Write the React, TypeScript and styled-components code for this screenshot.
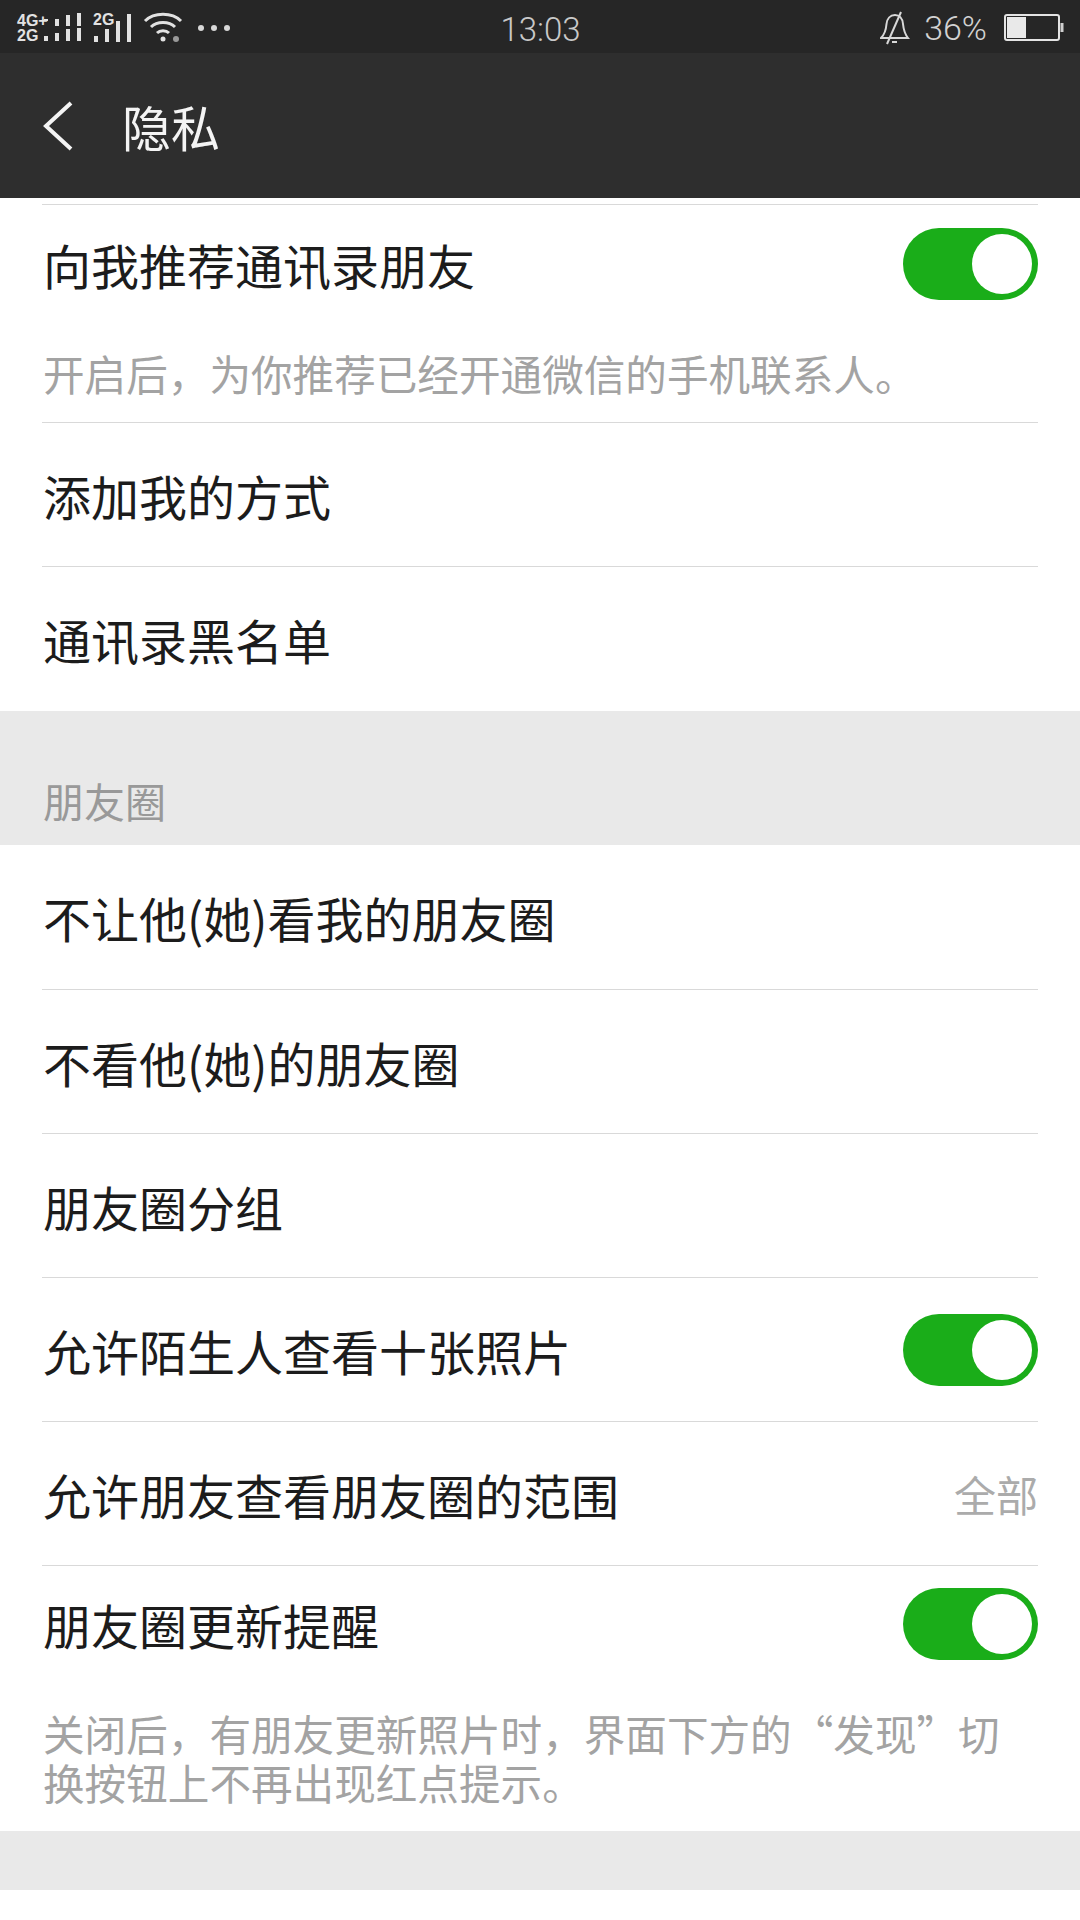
import { createGlobalStyle, styled } from 'styled-components';

const GlobalStyle = createGlobalStyle`
  html, body {
    margin: 0;
    padding: 0;
    background: #fff;
  }
  body {
    font-family: "Liberation Sans", "Noto Sans CJK SC", sans-serif;
  }
`;

const Page = styled.div`
  width: 1080px;
  height: 1920px;
  overflow: hidden;
  display: flex;
  flex-direction: column;
  background: #fff;
`;

const StatusBar = styled.div`
  height: 53px;
  flex: none;
  display: grid;
  grid-template-columns: 1fr auto 1fr;
  align-items: center;
  padding: 0 16px 0 17px;
  background: #262626;
  color: #d8d8d8;
`;

const StatusLeft = styled.div`
  display: flex;
  align-items: center;
  height: 53px;
`;

const StatusRight = styled.div`
  display: flex;
  align-items: center;
  justify-content: flex-end;
  height: 53px;
`;

const NetLabels = styled.div`
  display: flex;
  flex-direction: column;
  font: bold 16px/15px "Liberation Sans", sans-serif;
  width: 27px;
  color: #e2e2e2;
`;

const Clock = styled.div`
  font: 300 33px/53px Roboto, "Liberation Sans", sans-serif;
  padding-top: 3px;
  color: #c9c9c9;
`;

const Battery = styled.div`
  font: 300 34px/53px Roboto, "Liberation Sans", sans-serif;
  margin: 0 17px 0 14px;
  color: #d2d2d2;
`;

const Header = styled.header`
  height: 145px;
  flex: none;
  display: flex;
  align-items: center;
  padding-left: 43px;
  background: #2e2e2e;
`;

const Title = styled.h1`
  margin: 0 0 0 49px;
  font: 400 49px/1 "Noto Sans CJK SC", sans-serif;
  color: #f4f4f4;
`;

const Section = styled.section`
  background: #fff;
`;

const Divider = styled.div`
  height: 1px;
  margin: 0 42px;
  background: #d9d9d9;
`;

const Row = styled.div<{ $height?: number }>`
  height: ${(p) => p.$height ?? 143}px;
  display: flex;
  align-items: center;
  justify-content: space-between;
  padding: 0 42px 0 43px;
`;

const RowLabel = styled.span`
  font: 400 48px/1 "Noto Sans CJK SC", sans-serif;
  color: #1c1c1c;
`;

const RowValue = styled.span`
  font: 400 42px/1 "Noto Sans CJK SC", sans-serif;
  color: #ababab;
`;

const Hint = styled.p`
  margin: 0;
  padding: 27px 42px 24px 43px;
  font: 400 41.6px/49px "Noto Sans CJK SC", sans-serif;
  color: #a3a3a3;
`;

const GroupGap = styled.div`
  height: 134px;
  box-sizing: border-box;
  display: flex;
  align-items: flex-end;
  padding: 0 0 20px 43px;
  background: #e9e9e9;
`;

const GroupTitle = styled.span`
  font: 400 41px/1.2 "Noto Sans CJK SC", sans-serif;
  color: #999;
`;

const Footer = styled.div`
  height: 59px;
  background: #e9e9e9;
`;

const SwitchTrack = styled.div`
  width: 135px;
  height: 72px;
  flex: none;
  box-sizing: border-box;
  display: flex;
  justify-content: flex-end;
  align-items: center;
  padding-right: 6px;
  border-radius: 36px;
  background: #1aad19;
`;

const SwitchKnob = styled.div`
  width: 60px;
  height: 60px;
  border-radius: 50%;
  background: #fff;
`;

function Switch() {
  return (
    <SwitchTrack>
      <SwitchKnob />
    </SwitchTrack>
  );
}

function DualSignal() {
  const top = [[0, 7, 2], [11, 7, 7], [22, 3, 11], [33, 1, 13]];
  const bottom = [[0, 24, 5], [11, 21, 8], [22, 17, 12], [33, 16, 13]];
  return (
    <svg width="38" height="32" viewBox="0 0 38 32" style={{ marginLeft: 0 }} fill="#e2e2e2">
      {[...top, ...bottom].map(([x, y, h]) => (
        <rect key={`${x}-${y}`} x={x} y={y} width="4" height={h} />
      ))}
    </svg>
  );
}

function SingleSignal() {
  return (
    <svg width="40" height="32" viewBox="0 0 40 32" style={{ marginLeft: 11 }} fill="#e2e2e2">
      <text x="0" y="13" fontSize="16" fontWeight="bold" fontFamily="Liberation Sans">2G</text>
      <rect x="1" y="24" width="4" height="6" />
      <rect x="12" y="17" width="4" height="13" />
      <rect x="23" y="9" width="4" height="21" />
      <rect x="34" y="2" width="4" height="28" />
    </svg>
  );
}

function Wifi() {
  return (
    <svg width="40" height="32" viewBox="0 0 40 32" style={{ marginLeft: 10 }} fill="none" stroke="#e2e2e2" strokeWidth="3">
      <path d="M2 9C11 0 29 0 38 9" />
      <path d="M8 15C14 9 26 9 32 15" />
      <path d="M14 21C17 18 23 18 26 21" />
      <circle cx="20" cy="27" r="2.5" fill="#e2e2e2" stroke="none" />
      <circle cx="33" cy="27" r="3" fill="#999" stroke="none" />
    </svg>
  );
}

function Dots() {
  return (
    <svg width="34" height="8" viewBox="0 0 34 8" style={{ marginLeft: 14 }} fill="#d8d8d8">
      <circle cx="4" cy="4" r="3" />
      <circle cx="17" cy="4" r="3" />
      <circle cx="30" cy="4" r="3" />
    </svg>
  );
}

function BellOff() {
  return (
    <svg width="30" height="34" viewBox="0 0 30 34" fill="none" stroke="#d8d8d8" strokeWidth="2">
      <path d="M1 27H28C24 22 23.500 18 23 13C22.500 7 19 4 15 4C10 4 7 8 6.500 13C6 19 5 23 1 27Z" />
      <path d="M21 1L7 33" />
      <path d="M12 31H17" />
    </svg>
  );
}

function BatteryIcon() {
  return (
    <svg width="60" height="28" viewBox="0 0 60 28">
      <rect x="1" y="1" width="54" height="25" rx="2" fill="none" stroke="#e4e4e4" strokeWidth="2" />
      <rect x="3" y="3" width="19" height="21" fill="#e9e9e9" />
      <rect x="56.500" y="9" width="3" height="9" fill="#cfcfcf" />
    </svg>
  );
}

function BackArrow() {
  return (
    <svg width="30" height="50" viewBox="0 0 30 50" fill="none" stroke="#f4f4f4" strokeWidth="4">
      <path d="M28 2L3 25L28 48" />
    </svg>
  );
}

export default function App() {
  return (
    <Page>
      <GlobalStyle />
      <StatusBar>
        <StatusLeft>
          <NetLabels>
            <span>4G+</span>
            <span>2G</span>
          </NetLabels>
          <DualSignal />
          <SingleSignal />
          <Wifi />
          <Dots />
        </StatusLeft>
        <Clock>13:03</Clock>
        <StatusRight>
          <BellOff />
          <Battery>36%</Battery>
          <BatteryIcon />
        </StatusRight>
      </StatusBar>
      <Header>
        <BackArrow />
        <Title>隐私</Title>
      </Header>
      <Section style={{ paddingTop: 6 }}>
        <Divider />
        <Row $height={117}>
          <RowLabel>向我推荐通讯录朋友</RowLabel>
          <Switch />
        </Row>
        <Hint>开启后，为你推荐已经开通微信的手机联系人。</Hint>
        <Divider />
        <Row>
          <RowLabel>添加我的方式</RowLabel>
        </Row>
        <Divider />
        <Row $height={144}>
          <RowLabel>通讯录黑名单</RowLabel>
        </Row>
      </Section>
      <GroupGap>
        <GroupTitle>朋友圈</GroupTitle>
      </GroupGap>
      <Section>
        <Row $height={144}>
          <RowLabel>不让他(她)看我的朋友圈</RowLabel>
        </Row>
        <Divider />
        <Row>
          <RowLabel>不看他(她)的朋友圈</RowLabel>
        </Row>
        <Divider />
        <Row>
          <RowLabel>朋友圈分组</RowLabel>
        </Row>
        <Divider />
        <Row>
          <RowLabel>允许陌生人查看十张照片</RowLabel>
          <Switch />
        </Row>
        <Divider />
        <Row>
          <RowLabel>允许朋友查看朋友圈的范围</RowLabel>
          <RowValue>全部</RowValue>
        </Row>
        <Divider />
        <Row $height={116}>
          <RowLabel>朋友圈更新提醒</RowLabel>
          <Switch />
        </Row>
        <Hint>关闭后，有朋友更新照片时，界面下方的“发现”切换按钮上不再出现红点提示。</Hint>
      </Section>
      <Footer />
    </Page>
  );
}
